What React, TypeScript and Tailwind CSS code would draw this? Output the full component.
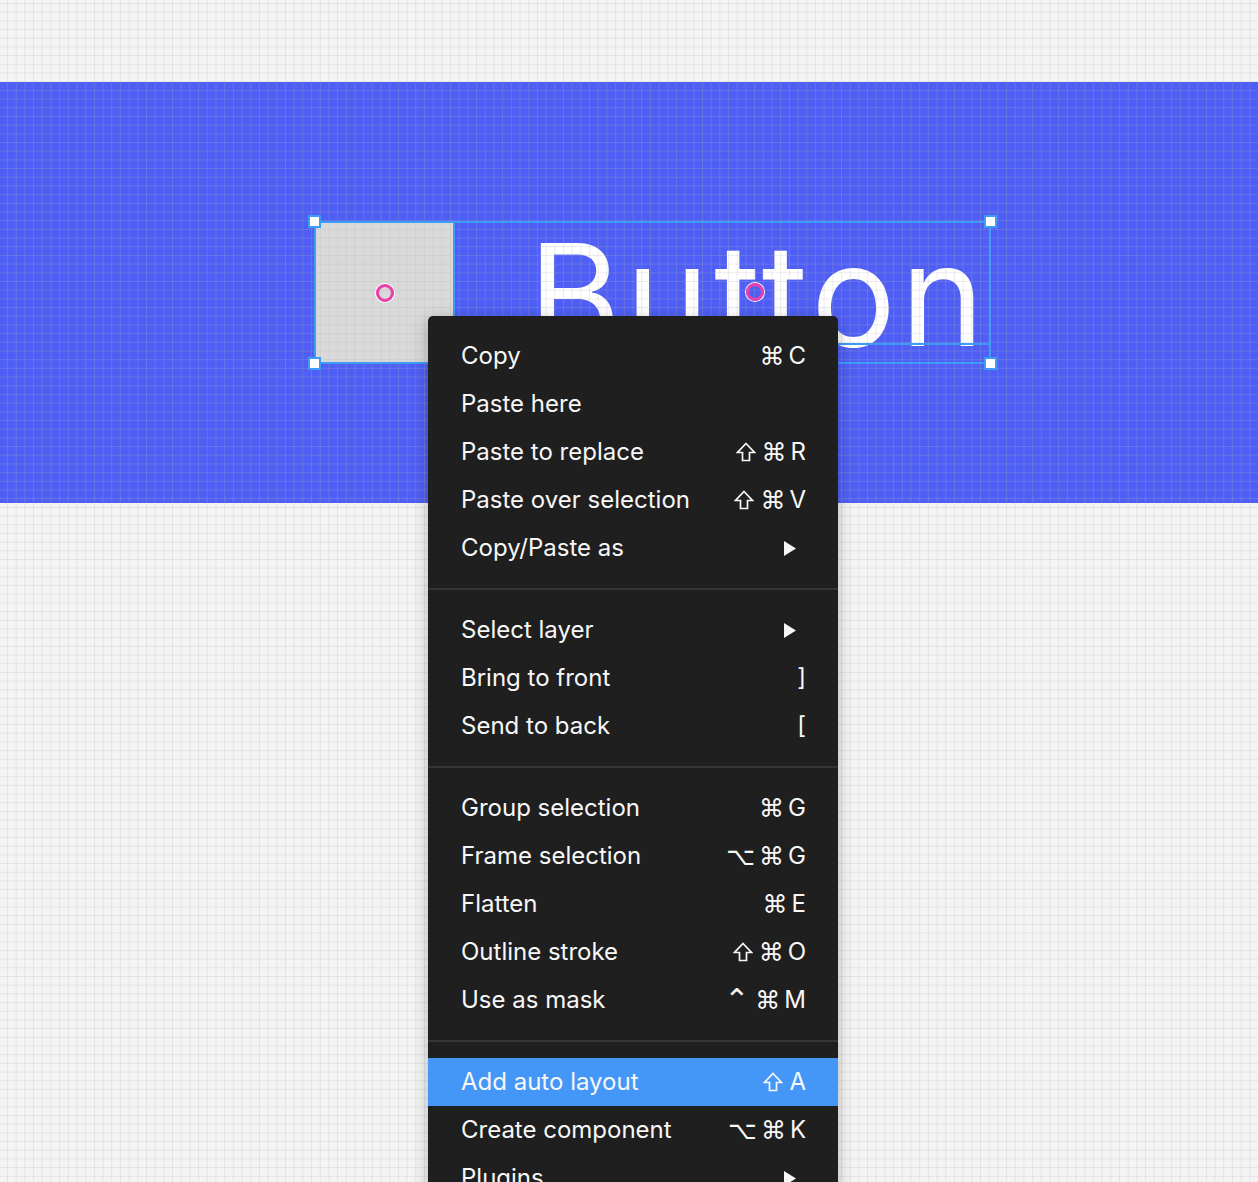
import React from "react"

type Item = { label: string; keys?: string[]; sub?: boolean; active?: boolean }

const GROUPS: Item[][] = [
  [
    { label: "Copy", keys: ["⌘", "C"] },
    { label: "Paste here" },
    { label: "Paste to replace", keys: ["⇧", "⌘", "R"] },
    { label: "Paste over selection", keys: ["⇧", "⌘", "V"] },
    { label: "Copy/Paste as", sub: true },
  ],
  [
    { label: "Select layer", sub: true },
    { label: "Bring to front", keys: ["]"] },
    { label: "Send to back", keys: ["["] },
  ],
  [
    { label: "Group selection", keys: ["⌘", "G"] },
    { label: "Frame selection", keys: ["⌥", "⌘", "G"] },
    { label: "Flatten", keys: ["⌘", "E"] },
    { label: "Outline stroke", keys: ["⇧", "⌘", "O"] },
    { label: "Use as mask", keys: ["⌃", "⌘", "M"] },
  ],
  [
    { label: "Add auto layout", keys: ["⇧", "A"], active: true },
    { label: "Create component", keys: ["⌥", "⌘", "K"] },
    { label: "Plugins", sub: true },
    { label: "Widgets", sub: true },
  ],
]

function ShiftIcon() {
  return (
    <svg width="20" height="20" viewBox="0 0 20 20" className="mr-[2px]">
      <path d="M10 1.5 L18.5 10.5 L13.5 10.5 L13.5 18.5 L6.5 18.5 L6.5 10.5 L1.5 10.5 Z" fill="none" stroke="#f7f7f7" strokeWidth="1.7" strokeLinejoin="miter" />
    </svg>
  )
}

function Key({ k }: { k: string }) {
  if (k === "⇧") return <ShiftIcon />
  if (k === "⌃")
    return <span className="font-['DejaVu_Sans',sans-serif] text-[30px] leading-none mr-[2px]">{k}</span>
  if (k === "⌘" || k === "⌥")
    return <span className="font-['DejaVu_Sans',sans-serif] text-[25px] leading-none">{k}</span>
  return <span>{k}</span>
}

function Handle({ className }: { className: string }) {
  return <div className={`absolute w-[13px] h-[13px] bg-white border-2 border-[#3d9cf5] ${className}`} />
}

function Origin() {
  return <div className="w-[18px] h-[18px] rounded-full border-[3px] border-[#ea3ead] ring-1 ring-white" />
}

function MenuRow({ item }: { item: Item }) {
  return (
    <div
      className={`h-12 flex items-center justify-between pl-[33px] pr-8 text-[24px] text-[#f7f7f7] ${
        item.active ? "bg-[#4597f7]" : ""
      }`}
    >
      <span>{item.label}</span>
      {item.keys && (
        <span className="flex items-center gap-[4px]">
          {item.keys.map((k, i) => (
            <Key key={i} k={k} />
          ))}
        </span>
      )}
      {item.sub && (
        <svg width="12" height="15" viewBox="0 0 12 15" className="mr-[10px]">
          <path d="M0 0 L12 7.5 L0 15 Z" fill="#f7f7f7" />
        </svg>
      )}
    </div>
  )
}

export default function App() {
  return (
    <div className="relative w-[1258px] h-[1182px] overflow-hidden bg-[#f4f4f4] font-['Inter','Liberation_Sans',sans-serif]">
      {/* canvas */}
      <div className="flex flex-col">
        <div className="h-[82px]" />
        <div className="h-[421px] bg-[#4f5ff5]" />
      </div>

      {/* selected objects: rectangle + text layer */}
      <div className="absolute left-[314px] top-[221px] w-[677px] h-[143px] flex p-[2px]">
        <div className="w-[139px] bg-[#d9d9d9]" />
        <div className="flex-1 pl-[74px] pt-[1px]">
          <div className="text-[141px] leading-none tracking-[0.035em] text-white whitespace-nowrap">Button</div>
        </div>
      </div>

      {/* pixel grid */}
      <div className="absolute inset-0 pointer-events-none bg-[linear-gradient(to_right,rgba(178,178,178,0.24)_1px,transparent_1px),linear-gradient(to_bottom,rgba(178,178,178,0.24)_1px,transparent_1px)] bg-[size:8.7px_8.7px] bg-[position:7px_3px]" />

      {/* selection chrome */}
      <div className="absolute left-[314px] top-[221px] w-[677px] h-[143px] flex border-2 border-[#3d9cf5]">
        <div className="w-[139px] border-r-2 border-[#3d9cf5] flex items-center justify-center">
          <Origin />
        </div>
        <div className="flex-1 h-[122px] border-b-2 border-[#3d9cf5] pl-[291px] pt-[60px]">
          <Origin />
        </div>
        <Handle className="-left-[8px] -top-[8px]" />
        <Handle className="-left-[8px] -bottom-[8px]" />
        <Handle className="-right-[8px] -top-[8px]" />
        <Handle className="-right-[8px] -bottom-[8px]" />
      </div>

      {/* context menu */}
      <div className="absolute left-[428px] top-[316px] w-[410px] bg-[#1f1f1f] rounded-t-[5px] shadow-[0_4px_16px_rgba(0,0,0,0.25)]">
        {GROUPS.map((group, gi) => (
          <div key={gi}>
            {gi > 0 && <div className="h-[2px] bg-[#353535]" />}
            <div className="py-4">
              {group.map((item) => (
                <MenuRow key={item.label} item={item} />
              ))}
            </div>
          </div>
        ))}
      </div>
    </div>
  )
}
